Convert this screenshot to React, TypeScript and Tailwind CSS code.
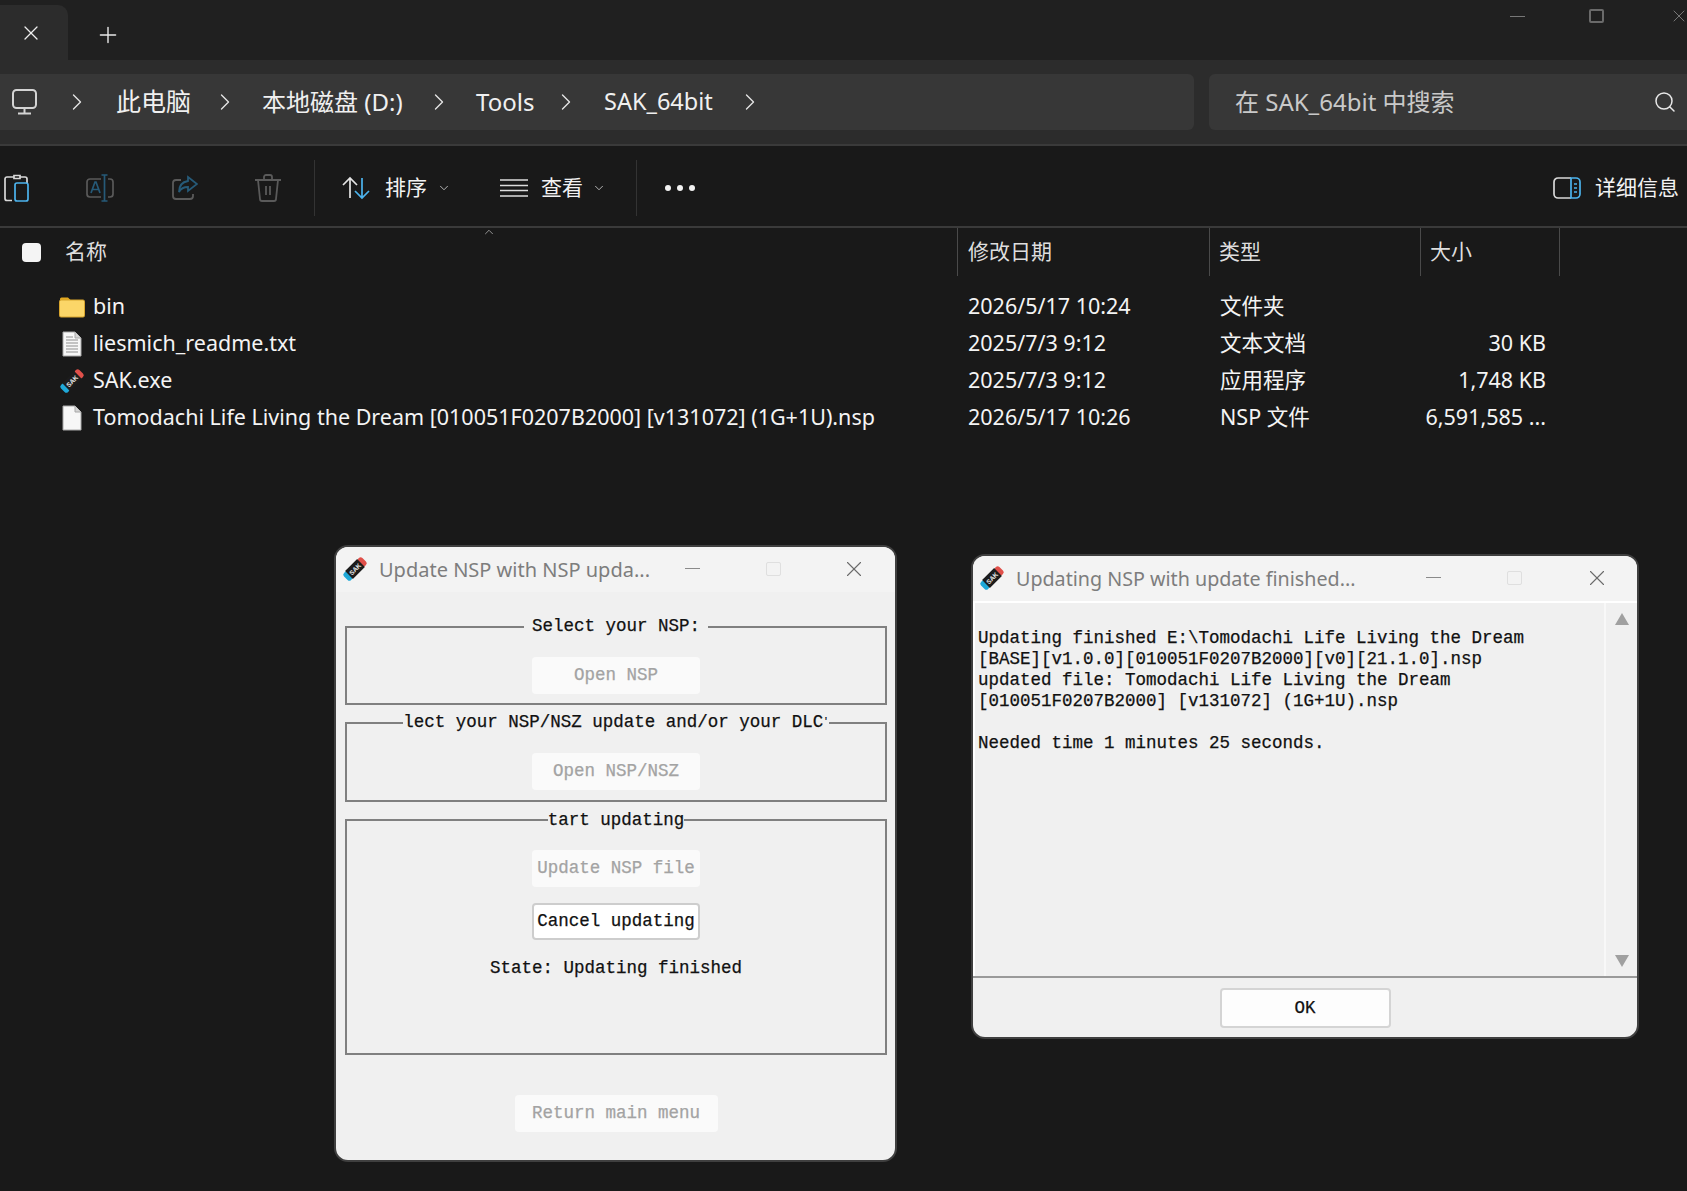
import { ChevronRight, ChevronDown, ChevronUp, Plus, Search, X } from "lucide-react"

const uiFont = "font-['Noto_Sans','Noto_Sans_CJK_SC',sans-serif]"
const monoFont = "font-['Liberation_Mono','DejaVu_Sans_Mono',monospace] [-webkit-text-stroke:0.25px]"

const files = [
  { name: "bin", date: "2026/5/17 10:24", type: "文件夹", size: "", icon: "folder" },
  { name: "liesmich_readme.txt", date: "2025/7/3 9:12", type: "文本文档", size: "30 KB", icon: "text" },
  { name: "SAK.exe", date: "2025/7/3 9:12", type: "应用程序", size: "1,748 KB", icon: "sak" },
  { name: "Tomodachi Life Living the Dream [010051F0207B2000] [v131072] (1G+1U).nsp", date: "2026/5/17 10:26", type: "NSP 文件", size: "6,591,585 ...", icon: "blank" },
]

const SakIcon = ({ size = 26 }: { size?: number }) => (
  <svg width={size} height={size} viewBox="0 0 26 26">
    <g transform="rotate(-45 13 13)">
      <rect x="0" y="8" width="6" height="10" rx="2.5" fill="#1fa8d8" />
      <rect x="20" y="8" width="6" height="10" rx="2.5" fill="#e0504a" />
      <rect x="4.5" y="7.5" width="17" height="11" fill="#1c1c1c" />
      <text x="13" y="15.5" textAnchor="middle" fontSize="6.5" fontWeight="700" fill="#e8e8e8" fontFamily="Liberation Sans">SAK</text>
    </g>
  </svg>
)

const FileIcon = ({ kind }: { kind: string }) => {
  if (kind === "sak") return <SakIcon />
  if (kind === "folder") {
    return (
      <svg width="26" height="22" viewBox="0 0 26 22">
        <path d="M1 3a1.5 1.5 0 0 1 1.5-1.5h6.5l3 3h-11z" fill="#e3a920" />
        <rect x="0.5" y="4" width="25" height="17" rx="1.5" fill="#fbd668" stroke="#d8a52c" />
      </svg>
    )
  }
  return (
    <svg className="mr-[3px]" width="20" height="26" viewBox="0 0 20 26">
      <path d="M1 1h12l6 6v18H1z" fill="#f7f7f7" stroke="#a8a8a8" />
      <path d="M13 1v6h6" fill="#d4d4d4" stroke="#a8a8a8" />
      {kind === "text" && (
        <path d="M4 6h7M4 9h12M4 12h12M4 15h12M4 18h12M4 21h12" stroke="#8f8f8f" strokeWidth="1.2" />
      )}
    </svg>
  )
}

const Crumb = ({ ml = 29, textMl = 31 }: { ml?: number; textMl?: number }) => (
  <ChevronRight size={28} strokeWidth={1.2} className="shrink-0 text-[#e4e4e4]" style={{ marginLeft: ml - 8, marginRight: textMl - 8 }} />
)

const ClassicButton = ({ label, active }: { label: string; active?: boolean }) => (
  <div className={`flex h-[37px] w-[168px] items-center justify-center rounded-[4px] text-[17.5px] whitespace-nowrap ${active ? "border-2 border-[#cdcdcd] bg-white text-[#111]" : "bg-[#fafafa] text-[#a3a3a3]"}`}>
    {label}
  </div>
)

const GroupBox = ({ legend, legendClass, height, children }: { legend: React.ReactNode; legendClass: string; height: string; children: React.ReactNode }) => (
  <fieldset className={`flex flex-col items-center border-2 border-[#808080] ${height}`}>
    <legend className={`mx-auto h-5 text-[17.5px] whitespace-pre text-[#111] ${legendClass}`}>{legend}</legend>
    {children}
  </fieldset>
)

const TitleBar = ({ title, titleClass, maxClass, closeClass }: { title: string; titleClass: string; maxClass: string; closeClass: string }) => (
  <div className={`flex h-[45px] shrink-0 items-center bg-[#f3f3f3] pb-[2px] [-webkit-text-stroke:0] ${uiFont}`}>
    <div className="ml-[6px]"><SakIcon /></div>
    <div className={`ml-[11px] pt-[2px] whitespace-nowrap text-[#7d7d7d] ${titleClass}`}>{title}</div>
    <div className="h-px w-[15px] bg-[#8a8a8a]" />
    <div className={`h-[14px] w-[15px] rounded-[2px] border border-[#dfdfdf] ${maxClass}`} />
    <X size={26} strokeWidth={1} className={`text-[#6b6b6b] ${closeClass}`} />
  </div>
)

export default function App() {
  return (
    <div className={`relative h-[1191px] w-[1687px] overflow-hidden bg-[#191919] text-[#f2f2f2] ${uiFont}`}>
      {/* tab strip */}
      <div className="flex h-[60px] bg-[#202020]">
        <div className="mt-[5px] flex w-[68px] items-center rounded-tr-[10px] bg-[#2c2c2c] pl-[19px]">
          <X size={24} strokeWidth={1.3} className="text-[#eeeeee]" />
        </div>
        <Plus size={26} strokeWidth={1.3} className="mt-[22px] ml-[27px] text-[#e8e8e8]" />
        <div className="flex-1" />
        <div className="mt-[16px] mr-[64px] h-px w-[15px] bg-[#777]" />
        <div className="mt-[9px] mr-[65px] h-[14px] w-[15px] rounded-[2px] border-2 border-[#6a6a6a]" />
        <X size={20} strokeWidth={1.2} className="mt-[6px] mr-[-2px] text-[#777]" />
      </div>

      {/* address row */}
      <div className="flex h-[86px] gap-[15px] border-b-2 border-[#3a3a3a] bg-[#2c2c2c] pt-[14px]">
        <div className="flex h-[56px] w-[1194px] items-center rounded-r-[6px] bg-[#373737] pl-[12px] text-[24px] text-[#f0f0f0]">
          <svg width="25" height="26" viewBox="0 0 25 26" fill="none" stroke="#d4d4d4" strokeWidth="2">
            <rect x="1" y="1" width="23" height="18" rx="3.5" />
            <path d="M12.5 19v5M6 24.5h13" />
          </svg>
          <Crumb ml={34} textMl={33} />
          <span className="w-[74px] text-[25px] whitespace-nowrap">此电脑</span>
          <Crumb />
          <span className="w-[142px] whitespace-nowrap">本地磁盘 (D:)</span>
          <Crumb />
          <span className="w-[55px] whitespace-nowrap">Tools</span>
          <Crumb ml={29} textMl={32} />
          <span className="w-[107px] text-[23.5px] whitespace-nowrap">SAK_64bit</span>
          <Crumb ml={33} textMl={8} />
        </div>
        <div className="flex h-[56px] flex-1 items-center rounded-l-[6px] bg-[#373737] pl-[26px] text-[24px] text-[#c9c9c9]">
          <span className="w-[418px] whitespace-nowrap">在 SAK_64bit 中搜索</span>
          <Search size={24} strokeWidth={1.5} className="text-[#e8e8e8]" />
        </div>
      </div>

      {/* command bar */}
      <div className="flex h-[82px] items-center border-b-2 border-[#3a3a3a] bg-[#191919] pt-[4px] text-[21px]">
        <svg className="ml-[4px]" width="25" height="28" viewBox="0 0 25 28" fill="none" strokeWidth="1.7">
          <path d="M10 1.5h6v3h-6zM10 3H3a2 2 0 0 0-2 2v19.5a2 2 0 0 0 2 2h5M16 3h5a2 2 0 0 1 2 2v4" stroke="#d8d8d8" />
          <rect x="11" y="9" width="13" height="18" rx="2" stroke="#4cb4ee" />
        </svg>
        <svg className="ml-[57px]" width="28" height="28" viewBox="0 0 28 28" fill="none" strokeWidth="1.7">
          <path d="M15 5H4a3 3 0 0 0-3 3v12a3 3 0 0 0 3 3h11M22 5h2a3 3 0 0 1 3 3v12a3 3 0 0 1-3 3h-2" stroke="#5a5a5a" />
          <path d="M5 19l4-11h1l4 11M6.5 15.5h6M18.5 1v26M15.5 1h6M15.5 27h6" stroke="#265a78" />
        </svg>
        <svg className="ml-[58px]" width="26" height="26" viewBox="0 0 26 26" fill="none" strokeWidth="1.8">
          <path d="M9 5H4a3 3 0 0 0-3 3v13a3 3 0 0 0 3 3h14a3 3 0 0 0 3-3v-2" stroke="#5a5a5a" />
          <path d="M16 2l9 7-9 7v-4c-4 0-7 1-9 5 0-6 3-10 9-11z" stroke="#265a78" />
        </svg>
        <svg className="ml-[57px]" width="26" height="28" viewBox="0 0 26 28" fill="none" stroke="#5a5a5a" strokeWidth="1.8">
          <path d="M0 6h26M9 6V3a2 2 0 0 1 2-2h4a2 2 0 0 1 2 2v3M3 6l2 19a2 2 0 0 0 2 2h12a2 2 0 0 0 2-2l2-19M11 12v9M15 12v9" />
        </svg>
        <div className="ml-[33px] h-[56px] w-px bg-[#333333]" />
        <svg className="ml-[27px]" width="28" height="24" viewBox="0 0 28 24" fill="none" strokeWidth="1.7">
          <path d="M8 22V2M1 9l7-7 7 7" stroke="#e4e4e4" />
          <path d="M20 2v20M13 15l7 7 7-7" stroke="#4cb4ee" />
        </svg>
        <span className="ml-[15px] w-[43px] whitespace-nowrap">排序</span>
        <ChevronDown size={14} strokeWidth={1.5} className="ml-[9px] text-[#c8c8c8]" />
        <svg className="ml-[49px]" width="28" height="18" viewBox="0 0 28 18" fill="none" stroke="#dcdcdc" strokeWidth="1.7">
          <path d="M0 1h28M0 6.5h28M0 11.5h28M0 17h28" />
        </svg>
        <span className="ml-[13px] w-[43px] whitespace-nowrap">查看</span>
        <ChevronDown size={14} strokeWidth={1.5} className="ml-[8px] text-[#c8c8c8]" />
        <div className="ml-[30px] h-[56px] w-px bg-[#333333]" />
        <div className="ml-[28px] flex gap-[6px]">
          <span className="size-[6px] rounded-full bg-[#f2f2f2]" />
          <span className="size-[6px] rounded-full bg-[#f2f2f2]" />
          <span className="size-[6px] rounded-full bg-[#f2f2f2]" />
        </div>
        <div className="flex-1" />
        <svg width="28" height="22" viewBox="0 0 28 22" fill="none" strokeWidth="1.7">
          <path d="M18 1H5a4 4 0 0 0-4 4v12a4 4 0 0 0 4 4h13" stroke="#d8d8d8" />
          <path d="M18 1h5a4 4 0 0 1 4 4v12a4 4 0 0 1-4 4h-5zM21 7h3M21 11h3M21 15h3" stroke="#4cb4ee" />
        </svg>
        <span className="mr-[8px] ml-[14px] whitespace-nowrap">详细信息</span>
      </div>

      {/* column header */}
      <div className="relative grid h-[48px] grid-cols-[957px_252px_211px_140px] text-[21px] text-[#dedede]">
        <div className="flex items-center pl-[22px]">
          <div className="size-[19px] rounded-[4px] bg-[#f4f4f4]" />
          <span className="ml-[24px]">名称</span>
        </div>
        <div className="flex items-center border-l border-[#4a4a4a] pl-[10px]">修改日期</div>
        <div className="flex items-center border-l border-[#4a4a4a] pl-[9px]">类型</div>
        <div className="flex items-center border-x border-[#4a4a4a] pl-[9px]">大小</div>
        <ChevronUp size={14} strokeWidth={1.2} className="absolute top-[-3px] left-[482px] text-[#c4c4c4]" />
      </div>

      {/* file rows */}
      <div className="mt-[12px] flex flex-col">
        {files.map((f) => (
          <div key={f.name} className="grid h-[37px] grid-cols-[968px_252px_326px] items-center text-[21.5px] whitespace-nowrap text-[#f4f4f4]">
            <div className="flex items-center">
              <div className="flex w-[93px] justify-end pr-[8px]"><FileIcon kind={f.icon} /></div>
              <span>{f.name}</span>
            </div>
            <span>{f.date}</span>
            <div className="flex justify-between">
              <span>{f.type}</span>
              <span>{f.size}</span>
            </div>
          </div>
        ))}
      </div>

      {/* left dialog */}
      <div className={`absolute top-[545px] left-[334px] flex h-[617px] w-[563px] flex-col overflow-hidden rounded-[14px] border-2 border-[#3f3f3f] bg-[#f0f0f0] ${monoFont}`}>
        <TitleBar title="Update NSP with NSP upda..." titleClass="w-[306px] text-[20px]" maxClass="ml-[66px]" closeClass="ml-[60px]" />
        <div className="flex flex-1 flex-col pt-[25px] pr-[8px] pl-[9px]">
          <GroupBox legend="Select your NSP:" legendClass="px-[8px] leading-[18px]" height="h-[88px]">
            <div className="mt-[20px]"><ClassicButton label="Open NSP" /></div>
          </GroupBox>
          <div className="mt-[8px]">
            <GroupBox
              legend={<>lect your NSP/NSZ update and/or your DLC<span className="align-top text-[9px]">'</span></>}
              legendClass="leading-[18px]"
              height="h-[89px]"
            >
              <div className="mt-[20px]"><ClassicButton label="Open NSP/NSZ" /></div>
            </GroupBox>
          </div>
          <div className="mt-[8px]">
            <GroupBox legend="tart updating" legendClass="leading-5" height="h-[245px]">
              <div className="mt-[20px]"><ClassicButton label="Update NSP file" /></div>
              <div className="mt-[16px]"><ClassicButton label="Cancel updating" active /></div>
              <div className="mt-[15px] text-[17.5px] whitespace-nowrap text-[#111]">State: Updating finished</div>
            </GroupBox>
          </div>
          <div className="mt-[40px] flex justify-center">
            <div className="flex h-[37px] w-[203px] items-center justify-center rounded-[4px] bg-[#fafafa] text-[17.5px] whitespace-nowrap text-[#a3a3a3]">Return main menu</div>
          </div>
        </div>
      </div>

      {/* right dialog */}
      <div className={`absolute top-[554px] left-[971px] flex h-[485px] w-[668px] flex-col overflow-hidden rounded-[14px] border-2 border-[#3f3f3f] bg-[#f0f0f0] ${monoFont}`}>
        <TitleBar title="Updating NSP with update finished..." titleClass="w-[410px] text-[19.7px]" maxClass="ml-[66px]" closeClass="ml-[62px]" />
        <div className="flex flex-1 border-t-2 border-l-2 border-white">
          <div className="flex-1 border-r-2 border-[#f8f8f8] pt-[25px] pl-[3px] text-[17.5px] leading-[21px] whitespace-pre text-[#111]">
            {"Updating finished E:\\Tomodachi Life Living the Dream\n[BASE][v1.0.0][010051F0207B2000][v0][21.1.0].nsp\nupdated file: Tomodachi Life Living the Dream\n[010051F0207B2000] [v131072] (1G+1U).nsp\n\nNeeded time 1 minutes 25 seconds."}
          </div>
          <div className="flex w-[31px] flex-col items-center justify-between pt-[10px] pb-[9px]">
            <div className="h-0 w-0 border-x-[7.5px] border-b-[12px] border-x-transparent border-b-[#a0a0a0]" />
            <div className="h-0 w-0 border-x-[7.5px] border-t-[12px] border-x-transparent border-t-[#a0a0a0]" />
          </div>
        </div>
        <div className="flex h-[61px] shrink-0 items-center justify-center border-t-2 border-[#9a9a9a]">
          <div className="flex h-[40px] w-[171px] items-center justify-center rounded-[4px] border-2 border-[#d4d4d4] bg-[#fdfdfd] pt-[2px] text-[17.5px] text-[#111]">OK</div>
        </div>
      </div>
    </div>
  )
}
